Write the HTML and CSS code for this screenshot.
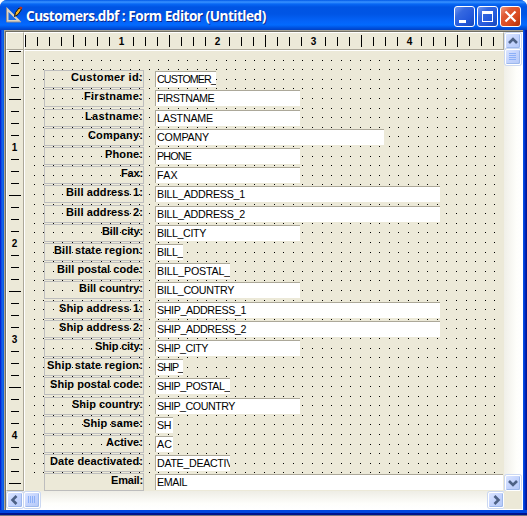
FILE: index.html
```
<!DOCTYPE html>
<html lang="en">
<head>
<meta charset="utf-8">
<title>Form Editor</title>
<link rel="stylesheet" href="styles.css">
</head>
<body>
<div class="window">
  <header class="titlebar">
    <svg class="app-icon" width="18" height="18" viewBox="0 0 18 18">
      <path d="M1.500 3.500v11.500h11.500z" fill="#176be8" stroke="#ddd5c5" stroke-width="2"/>
      <path d="M0.500 1.500v14.500h14.500" fill="none" stroke="#8d8b91" stroke-width="1"/>
      <path d="M8.500 10.500l1-4 3.500-4.500 2.500 1.500-3.500 5z" fill="#f4b323" stroke="#111" stroke-width="1"/>
      <path d="M13 2l1.500-1.500 2 1-1 2z" fill="#c83316"/>
    </svg>
    <h1 class="title">Customers.dbf : Form Editor (Untitled)</h1>
    <div class="controls">
      <span class="control"><svg width="19" height="19"><path d="M4 13h7v3H4z" fill="#fff"/></svg></span>
      <span class="control"><svg width="19" height="19"><path d="M4 4h11v11H4zM5 7v7h9V7z" fill="#fff" fill-rule="evenodd"/></svg></span>
      <span class="control close"><svg width="19" height="19"><path d="M4.500 4.500l10 10M14.500 4.500l-10 10" stroke="#fff" stroke-width="2.200"/></svg></span>
    </div>
  </header>
  <main class="client">
    <div class="corner"></div>
    <div class="ruler-h"><svg id="ruler-h" width="478" height="17"></svg></div>
    <div class="bar-v">
      <span class="button"><svg width="14" height="14"><path d="M3 9l4-4 4 4" class="arrow"/></svg></span>
      <span class="button thumb"><svg width="14" height="14"><path d="M3 3.500h7M3 5.500h7M3 7.500h7M3 9.500h7" class="grip"/></svg></span>
      <span class="button end"><svg width="14" height="14"><path d="M3 5l4 4 4-4" class="arrow"/></svg></span>
    </div>
    <div class="ruler-v"><svg id="ruler-v" width="16" height="440"></svg></div>
    <section class="canvas">
      <div class="rows" id="rows"></div>
      <svg class="dots" width="479" height="440">
        <defs><pattern id="grid" x="9" y="9" width="48" height="48" patternUnits="userSpaceOnUse"><path id="grid-dots"/></pattern></defs>
        <rect x="9" y="9" width="462" height="415" fill="url(#grid)"/>
      </svg>
    </section>
    <div class="bar-h">
      <span class="button"><svg width="14" height="14"><path d="M8.500 3l-4 4 4 4" class="arrow"/></svg></span>
      <span class="button thumb"><svg width="14" height="14"><path d="M3.500 3v7M5.500 3v7M7.500 3v7M9.500 3v7" class="grip"/></svg></span>
      <span class="button end"><svg width="14" height="14"><path d="M5.500 3l4 4-4 4" class="arrow"/></svg></span>
    </div>
    <div class="size-box"></div>
  </main>
</div>
<script src="form.js"></script>
</body>
</html>
```
FILE: styles.css
```
* { box-sizing: border-box; }
body { margin: 0; background: #fff; font-family: "Liberation Sans", Arial, sans-serif; overflow: hidden; }
svg { display: block; }
.window {
  width: 527px; height: 516px; padding: 0 4px 6px;
  border-radius: 7px 7px 0 0;
  background: linear-gradient(90deg, #0019cf 0, #0831d9 1px, #166aee 2px, #0855dd 4px, #0855dd 523px, #0046e8 524px, #0028c0 525px, #00138c 527px);
  box-shadow: inset 0 -1px #77797f, inset 0 -3px #00138c, inset 0 -6px #0046e0;
  overflow: hidden;
}
.titlebar {
  display: flex; align-items: center; height: 30px; margin: 0 -4px; padding: 2px 6px 0 6px;
  background: linear-gradient(#0058e6 0, #3a93ff 2px, #0868f5 4px, #0054e3 7px, #0055e5 14px, #0463f8 21px, #026afe 25px, #0058e8 27px, #0040c4 30px);
}
.app-icon { margin-top: -2px; }
.title {
  flex: 1; margin: 0 0 0 2px; color: #fff; white-space: nowrap;
  font: 700 13.6px/20px "Trebuchet MS", "Open Sans", sans-serif;
  letter-spacing: -0.5px; text-shadow: 1px 1px #0a2a90;
}
.controls { display: flex; gap: 2px; }
.control {
  width: 21px; height: 21px; border: 1px solid #fff; border-radius: 3px;
  background: linear-gradient(135deg, #7197f0 0, #3568e0 30%, #2459dc 65%, #1748b8 100%);
}
.close { background: linear-gradient(135deg, #ef9a80 0, #e05a34 30%, #d94a20 65%, #b03008 100%); }
.client {
  display: grid; grid-template-columns: 18px 480px 18px; grid-template-rows: 18px 441px 18px;
  width: 519px; height: 480px; padding: 2px 0 0 2px;
  background: #ece9d8;
  box-shadow: inset 1px 1px #aca899, inset 2px 2px #716f64, inset -3px 0 #fff, inset 0 -1px #fff;
}
.corner, .ruler-h { border-bottom: 1px solid #aca899; border-top: 1px solid #fff; box-shadow: 0 1px #fff; }
.corner { border-left: 1px solid #fff; border-right: 1px solid #aca899; }
.ruler-h { border-left: 1px solid #fff; border-right: 1px solid #aca899; }
.ruler-v { border-left: 1px solid #fff; border-right: 1px solid #aca899; border-bottom: 1px solid #aca899; padding-top: 1px; overflow: hidden; }
.ruler-h svg, .ruler-v svg { font: 700 10px "Liberation Sans", Arial, sans-serif; text-anchor: middle; shape-rendering: crispEdges; }
.canvas { display: grid; padding-top: 1px; border-left: 1px solid #fff; overflow: hidden; }
.rows, .dots { grid-area: 1 / 1; }
.dots { pointer-events: none; }
.rows { display: grid; grid-auto-rows: 19px 20px 19px 19px 19px; padding: 19px 0 0 19px; position: relative; align-content: start; }
.row { display: grid; grid-template-columns: 100px 1fr; column-gap: 11px; align-items: start; }
.label {
  height: 18px; border: 1px solid #bdbdbd; text-align: right;
  font-size: 11px; font-weight: 700; line-height: 13px; white-space: nowrap; color: #000;
}
.field {
  position: relative; z-index: 1;
  height: 16px; margin-top: 1px; padding-left: 1px; border: solid #aca899; border-width: 1px 0 0 1px;
  background: #fff; font-size: 10.7px; line-height: 15px; overflow: hidden; white-space: nowrap;
}
.w-key { width: 61px; } .w-name { width: 145px; } .w-company { width: 229px; } .w-address { width: 285px; }
.w-state { width: 28px; } .w-code { width: 75px; } .w-flag { width: 18px; } .w-email { width: 348px; }
.bar-v { display: flex; flex-direction: column; padding: 1px 1px 0 1px; grid-row: 1 / 3; grid-column: 3; background: linear-gradient(90deg, #f0efe8, #fefefb 70%, #fff); }
.bar-h { display: flex; grid-column: 1 / 3; padding: 1px 0 1px 1px; background: linear-gradient(#eeede5, #fefefb 70%, #fff); }
.size-box { background: #ece9d8; }
.button {
  flex: none; width: 16px; height: 16px; border: 1px solid #fff; border-radius: 2px;
  background: linear-gradient(135deg, #dbe5ff, #c3d3fd 50%, #b5c9f7); box-shadow: inset -1px -1px #9db8ec, 0 0 0 1px #cbd8f2;
}
.bar-h .thumb { margin-left: 1px; }
.bar-v .end { margin-top: auto; }
.bar-h .end { margin-left: auto; }
.arrow { fill: none; stroke: #4d6185; stroke-width: 2.6; }
.grip { fill: none; stroke: #8cb0f8; stroke-width: 1; }
```
FILE: form.js
```
// Label, label width, field name, name width, field size.
const rows = [
  ["Customer id:", 72, "CUSTOMER_", 59, "key"], ["Firstname:", 59, "FIRSTNAME", 57, "name"],
  ["Lastname:", 58, "LASTNAME", 56, "name"], ["Company:", 55, "COMPANY", 52, "company"],
  ["Phone:", 38, "PHONE", 34, "name"], ["Fax:", 22, "FAX", 21, "name"],
  ["Bill address 1:", 77, "BILL_ADDRESS_1", 88, "address"], ["Bill address 2:", 77, "BILL_ADDRESS_2", 88, "address"],
  ["Bill city:", 41, "BILL_CITY", 49, "name"], ["Bill state region:", 89, "BILL_", 26, "state"],
  ["Bill postal code:", 86, "BILL_POSTAL_", 73, "code"], ["Bill country:", 64, "BILL_COUNTRY", 77, "name"],
  ["Ship address 1:", 84, "SHIP_ADDRESS_1", 89, "address"], ["Ship address 2:", 84, "SHIP_ADDRESS_2", 89, "address"],
  ["Ship city:", 48, "SHIP_CITY", 51, "name"], ["Ship state region:", 96, "SHIP_", 26, "state"],
  ["Ship postal code:", 93, "SHIP_POSTAL_", 73, "code"], ["Ship country:", 71, "SHIP_COUNTRY", 78, "name"],
  ["Ship same:", 60, "SH", 14, "flag"], ["Active:", 37, "AC", 15, "flag"],
  ["Date deactivated:", 93, "DATE_DEACTIV", 76, "code"], ["Email:", 32, "EMAIL", 30, "email"]
];
document.getElementById("rows").innerHTML = rows.map(([label, lw, field, fw, size]) =>
  `<div class="row"><div class="label"><span data-width="${lw}">${label}</span></div><div class="field w-${size}"><span data-width="${fw}">${field}</span></div></div>`).join("");
for (const span of document.querySelectorAll("[data-width]")) {
  const spare = span.dataset.width - span.getBoundingClientRect().width;
  span.style.letterSpacing = `${spare / span.textContent.length}px`;
}

// The snap grid repeats every 48px, five dots per period.
const steps = [0, 9, 19, 28, 38];
document.getElementById("grid-dots").setAttribute("d",
  steps.flatMap(y => steps.map(x => `M${x} ${y}h1v1h-1z`)).join(""));

// Eight ticks to the unit; whole units carry a number, halves a long tick.
let across = "", down = "";
for (let i = 0; i < 40; i++) {
  const p = i * 12, long = i % 8 === 0 || i % 8 === 4;
  if (i && i % 8 === 0) {
    across += `<text x="${p + 0.5}" y="12">${i / 8}</text>`;
  } else {
    across += long ? `<rect x="${p}" y="2" width="1" height="12"/>` : `<rect x="${p}" y="4" width="1" height="9"/>`;
  }
  if (i < 37) {
    if (i && i % 8 === 0) down += `<text x="7.500" y="${p + 4}">${i / 8}</text>`;
    else down += long ? `<rect x="2" y="${p}" width="12" height="1"/>` : `<rect x="4" y="${p}" width="8" height="1"/>`;
  }
}
document.getElementById("ruler-h").innerHTML = across;
document.getElementById("ruler-v").innerHTML = down;
```
